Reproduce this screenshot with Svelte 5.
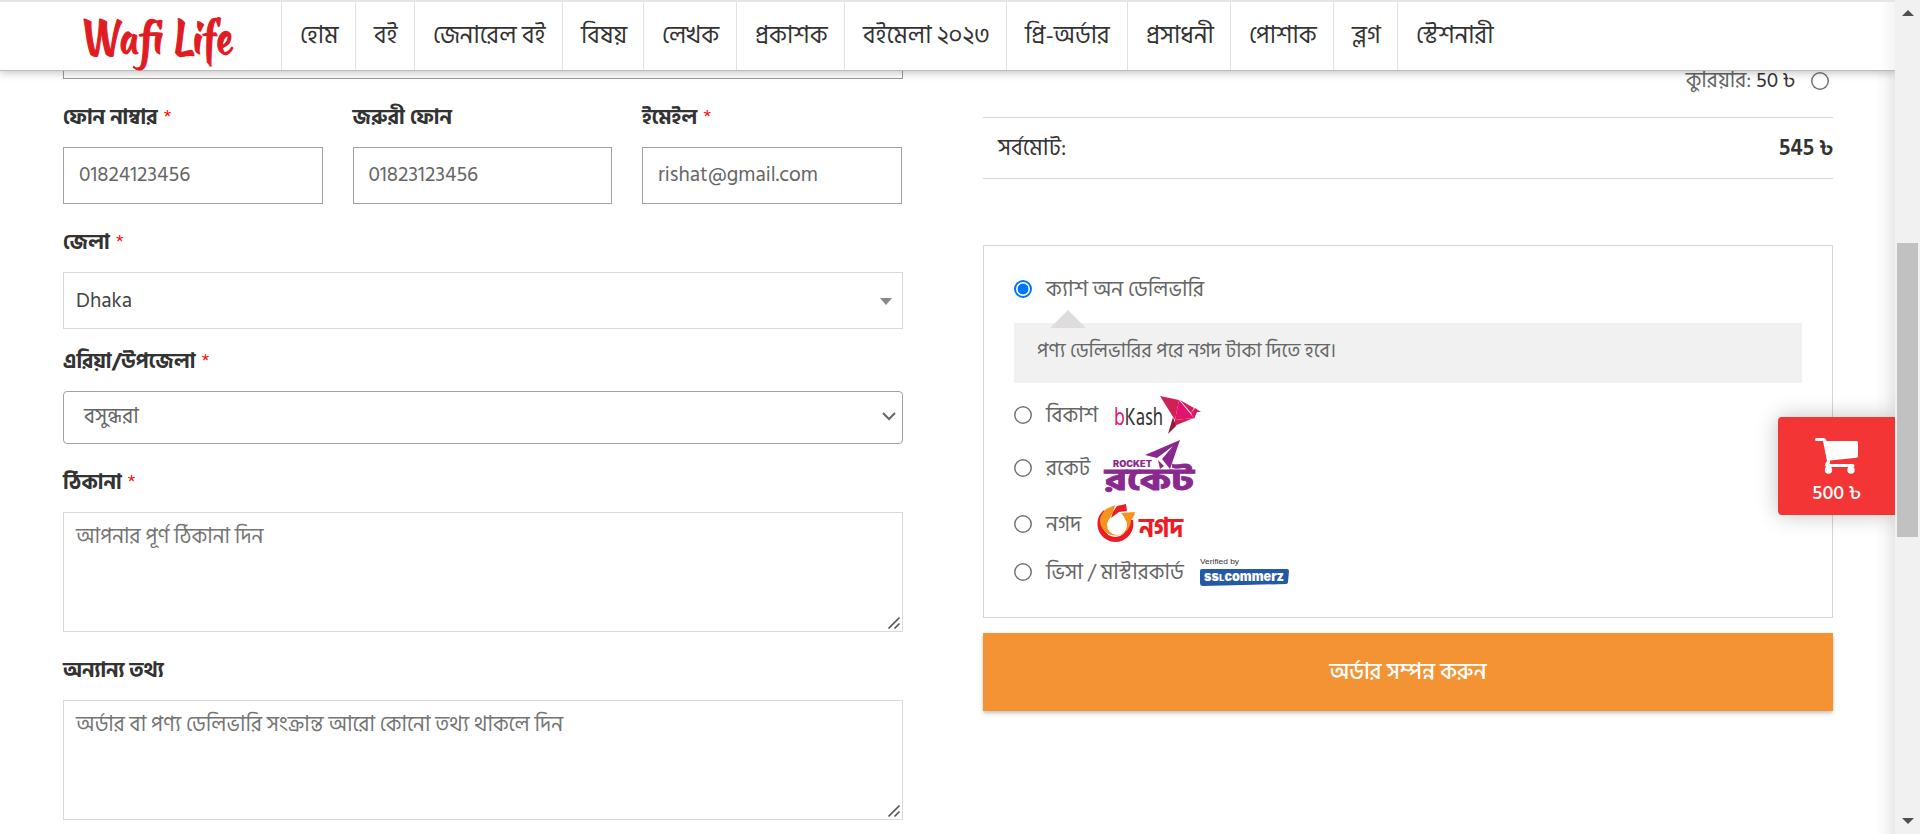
<script>
  const nav = [
    { label: 'হোম', width: 74 },
    { label: 'বই', width: 59 },
    { label: 'জেনারেল বই', width: 148 },
    { label: 'বিষয়', width: 81 },
    { label: 'লেখক', width: 93 },
    { label: 'প্রকাশক', width: 108 },
    { label: 'বইমেলা ২০২৩', width: 162 },
    { label: 'প্রি-অর্ডার', width: 121 },
    { label: 'প্রসাধনী', width: 103 },
    { label: 'পোশাক', width: 103 },
    { label: 'ব্লগ', width: 64 },
    { label: 'স্টেশনারী', width: 130 }
  ];
  const contacts = [
    { label: 'ফোন নাম্বার', value: '01824123456', required: true },
    { label: 'জরুরী ফোন', value: '01823123456', required: false },
    { label: 'ইমেইল', value: 'rishat@gmail.com', required: true }
  ];
</script>

{#snippet label(text, required)}
  <div class="label"><b>{text}</b>{#if required}<span class="star">*</span>{/if}</div>
{/snippet}

{#snippet grip()}
  <svg class="grip" width="12" height="12" viewBox="0 0 12 12"><path d="M0.500 11.500L11.500 0.500M6.500 11.500L11.500 6.500" stroke="#555" stroke-width="1.700" fill="none" /></svg>
{/snippet}

<div class="page">
  <div class="view">
    <header>
      <div class="brand">
        <svg width="150" height="60" viewBox="0 0 150 60" aria-label="Wafi Life">
          <text x="0" y="42.500" transform="translate(-13 0) skewX(13)" class="logo" textLength="152" lengthAdjust="spacingAndGlyphs">Wafi Life</text>
        </svg>
      </div>
      <nav>
        {#each nav as item}
          <a style="width:{item.width}px">{item.label}</a>
        {/each}
      </nav>
    </header>

    <main>
      <section class="form">
        <div class="cut"></div>
        <div class="trio">
          {#each contacts as c}
            <div>
              {@render label(c.label, c.required)}
              <div class="box dark">{c.value}</div>
            </div>
          {/each}
        </div>
        {@render label('জেলা', true)}
        <div class="box district"><span>Dhaka</span><i class="caret"></i></div>
        {@render label('এরিয়া/উপজেলা', true)}
        <div class="box dark area"><span>বসুন্ধরা</span><svg width="14" height="9" viewBox="0 0 14 9"><path d="M1 1l6 6 6-6" fill="none" stroke="#666" stroke-width="2" /></svg></div>
        {@render label('ঠিকানা', true)}
        <div class="box note">আপনার পূর্ণ ঠিকানা দিন{@render grip()}</div>
        {@render label('অন্যান্য তথ্য', false)}
        <div class="box note">অর্ডার বা পণ্য ডেলিভারি সংক্রান্ত আরো কোনো তথ্য থাকলে দিন{@render grip()}</div>
      </section>

      <section class="order">
        <div class="courier">কুরিয়ার: <em>50 ৳</em><i class="radio"></i></div>
        <div class="total"><span>সর্বমোট:</span><b>545 ৳</b></div>
        <div class="payment">
          <div class="opt first"><i class="radio on"></i><span>ক্যাশ অন ডেলিভারি</span></div>
          <div class="hint">পণ্য ডেলিভারির পরে নগদ টাকা দিতে হবে।</div>
          <div class="opt bk"><i class="radio"></i><span>বিকাশ</span>
            <svg class="m-bk" width="88" height="40" viewBox="0 0 88 40">
              <text x="0" y="30" class="bk-t" textLength="49" lengthAdjust="spacingAndGlyphs"><tspan fill="#e2136e">b</tspan>Kash</text>
              <path d="M46 1L65 5L61 25Z" fill="#d12053" /><path d="M65 5L61 25L80 23Z" fill="#e2136e" /><path d="M66 5L80 13L77 18Z" fill="#d12053" /><path d="M77 18L81 13L87 17L83 17L80 24Z" fill="#d91a60" /><path d="M61 25L80 23L60 31Z" fill="#d12053" /><path d="M59 22L62 31L54 39Z" fill="#9e1638" />
            </svg>
          </div>
          <div class="opt rk"><i class="radio"></i><span>রকেট</span>
            <svg class="m-rk" width="92" height="56" viewBox="0 0 92 56">
              <path d="M41 15L76 0L66 29L58 19L69 6L53 18Z" fill="#89288f" /><path d="M54 20L60 26L56 29Z" fill="#89288f" />
              <text x="9" y="26.500" class="rk-s" textLength="39" lengthAdjust="spacingAndGlyphs">ROCKET</text>
              <text x="1" y="49.500" class="rk-t" textLength="89" lengthAdjust="spacingAndGlyphs">রকেট</text>
            </svg>
          </div>
          <div class="opt ng"><i class="radio"></i><span>নগদ</span>
            <svg class="m-ng" width="88" height="40" viewBox="0 0 88 40">
              <path d="M7 6A18 18 0 1 0 36 16L30 16A12.500 12.500 0 1 1 10 11Z" fill="#ec1c24" />
              <path d="M9 5L18 1L16 8L13 14A10 10 0 1 0 28 15L26 11L38 10L34 16A15.500 15.500 0 1 1 3 16Q4 10 9 5Z" fill="#f6921e" />
              <path d="M20 2L29 0L30 7L22 8L14 14L16 8Z" fill="#ec1c24" /><path d="M24 9L38 8L36 14L29 15Z" fill="#f6921e" />
              <text x="42" y="32.500" class="ng-t" textLength="44" lengthAdjust="spacingAndGlyphs">নগদ</text>
            </svg>
          </div>
          <div class="opt vs"><i class="radio"></i><span>ভিসা / মাস্টারকার্ড</span>
            <svg class="m-vs" width="90" height="32" viewBox="0 0 90 32">
              <text x="0" y="8" class="vs-s" textLength="39" lengthAdjust="spacingAndGlyphs">Verified by</text>
              <path d="M2 13L87 13Q89 13 89 15L88 26Q88 28 86 28L3 30Q0 30 0 27V15Q0 13 2 13Z" fill="#2458a9" />
              <text x="4" y="25" class="vs-t" textLength="80" lengthAdjust="spacingAndGlyphs">ssʟcommerz</text>
            </svg>
          </div>
        </div>
        <button>অর্ডার সম্পন্ন করুন</button>
      </section>
    </main>

    <div class="cart">
      <svg width="43" height="36" viewBox="0 0 43 36" fill="#fff"><path d="M1.500 0H9Q10.500 0 11 1.500L11.500 3H41.500Q43 3 43 4.500V18Q43 19.500 41.500 19.700L15 22.500Q15.500 24 14.500 26H38Q39.500 26 39.500 27.500T38 29H12Q10 29 10 27Q10 26 12 23L8 3H1.500Q0 3 0 1.500T1.500 0Z" /><circle cx="13.500" cy="32" r="3.700" /><circle cx="36" cy="32" r="3.700" /></svg>
      <span>500 ৳</span>
    </div>
  </div>
  <div class="scroll"><i class="up"></i><div class="thumb"></div><i class="down"></i></div>
</div>

<style>
  :global(body) { margin: 0; overflow: hidden; background: #fff; }
  .page { display: flex; width: 1920px; height: 834px; overflow: hidden; font-family: 'Hind Siliguri', 'Noto Sans', sans-serif; font-size: 21px; color: #666; }
  .view { position: relative; width: 1895px; height: 834px; overflow: hidden; background: linear-gradient(90deg, #fff 1875px, #f8f8f8 1885px, #e6e6e6 1895px); }
  header { position: relative; z-index: 2; box-sizing: border-box; height: 71px; display: flex; border-top: 2px solid #e6e6e6; border-bottom: 1px solid #bbb; background: linear-gradient(90deg, #fff 1880px, #f4f4f4 1895px); box-shadow: 0 1px 9px rgba(0,0,0,.28); }
  .brand { width: 281px; box-sizing: border-box; padding: 8px 0 0 84px; }
  .logo { font: 400 46px 'Kaushan Script', 'Caveat Brush', cursive; fill: #e01b22; stroke: #e01b22; stroke-width: 1.200px; }
  nav { display: flex; }
  nav a { box-sizing: border-box; border-left: 1px solid #e1e1e1; padding-left: 18px; font-size: 24px; line-height: 67px; color: #333; white-space: nowrap; }
  main { display: flex; gap: 80px; padding-left: 63px; }
  .form { width: 840px; }
  .cut { height: 7px; border: 1px solid #999; border-top: 0; margin-bottom: 19px; }
  .trio { display: grid; grid-template-columns: 259.500px 259.500px 259.500px; gap: 30px; margin-bottom: 19px; }
  .label { height: 49px; line-height: 40px; color: #333; display: flex; gap: 6px; white-space: nowrap; }
  .star { color: red; font-weight: 300; }
  .box { position: relative; box-sizing: border-box; border: 1px solid #d9d9d9; height: 57px; padding: 0 15px; line-height: 55px; white-space: nowrap; }
  .dark { border-color: #a2a2a2; }
  .district { display: flex; justify-content: space-between; align-items: center; padding: 2px 10px 0 12px; color: #444; line-height: 53px; margin-bottom: 13px; }
  .caret { border: 6px solid transparent; border-top: 7px solid #888; border-bottom: 0; }
  .area { height: 53px; line-height: 48px; border-radius: 4px; padding: 0 6px 2px 20px; display: flex; justify-content: space-between; align-items: center; margin-bottom: 19px; }
  .note { height: 120px; padding: 0 12px; line-height: 48px; color: #757575; margin-bottom: 19px; }
  .grip { position: absolute; right: 2px; bottom: 2px; }
  .order { width: 850px; }
  .radio { box-sizing: border-box; display: block; flex: none; width: 18px; height: 18px; box-shadow: inset 0 0 0 1.500px #767676; border-radius: 50%; background: #fff; }
  .radio.on { border: 2px solid #0075ff; box-shadow: none; background: radial-gradient(circle, #0075ff 5px, #fff 5.800px); }
  .courier { height: 46px; box-sizing: border-box; display: flex; justify-content: flex-end; align-items: center; padding: 0 4px 26px 0; white-space: pre; line-height: 32px; }
  .courier em { font-style: normal; color: #333; margin-right: 16px; }
  .total { box-sizing: border-box; height: 62px; border-top: 1px solid #d9d9d9; border-bottom: 1px solid #d9d9d9; padding-left: 15px; display: flex; justify-content: space-between; line-height: 61px; color: #333; font-size: 22.500px; }
  .total b { font-weight: 600; line-height: 60px; }
  .payment { box-sizing: border-box; height: 373px; margin-top: 66px; padding: 26px 30px 0; border: 1px solid #d5d5d5; }
  .opt { display: flex; align-items: center; white-space: nowrap; height: 32px; }
  .opt span { margin-left: 14px; line-height: 32px; padding-top: 1px; }
  .first { height: 33px; }
  .first span { padding-top: 2px; }
  .hint { position: relative; height: 60px; margin-top: 18px; padding-left: 23px; background: #f1f1f1; line-height: 57px; font-size: 19.750px; }
  .hint::before { content: ''; position: absolute; left: 36px; top: -13px; border: 18px solid transparent; border-top: 0; border-bottom-color: #dfdcde; }
  .bk { margin-top: 16px; } .rk { margin-top: 21px; } .ng { margin-top: 24px; } .vs { margin-top: 16px; }
  svg { flex: none; overflow: visible; display: block; }
  .m-bk { margin-left: 16px; } .m-rk { margin-left: 14px; } .m-ng { margin-left: 16px; } .m-vs { margin-left: 16px; }
  .bk-t { font: 25px 'Hind Siliguri', 'Open Sans', sans-serif; fill: #333; }
  .rk-s { font: 900 8.500px Inter, sans-serif; fill: #89288f; }
  .rk-t { font: 700 29px 'Hind Siliguri', sans-serif; fill: #89288f; stroke: #89288f; stroke-width: .8px; }
  .ng-t { font: 700 27px 'Hind Siliguri', sans-serif; fill: #ec1c24; }
  .vs-s { font: 8px 'Liberation Sans', sans-serif; fill: #333; }
  .vs-t { font: 900 13px Inter, sans-serif; fill: #fff; }
  button { display: block; width: 850px; height: 78px; margin-top: 15px; padding: 0 0 1px; border: 0; background: #f39334; box-shadow: 0 2px 4px rgba(0,0,0,.25); color: #fff; font: 500 22.200px 'Hind Siliguri', sans-serif; }
  .cart { position: absolute; z-index: 3; left: 1778px; top: 417px; width: 117px; height: 98px; box-sizing: border-box; padding-top: 21px; border-radius: 4px 0 0 4px; background: #f33535; box-shadow: 0 0 22px rgba(0,0,0,.24); display: flex; flex-direction: column; align-items: center; color: #fff; font: 500 20px/38px 'Hind Siliguri', sans-serif; }
  .scroll { width: 25px; height: 834px; background: #f1f1f1; display: flex; flex-direction: column; align-items: center; box-sizing: border-box; padding: 10px 0; }
  .thumb { width: 21px; height: 294px; margin-top: 227px; background: #c1c1c1; }
  .up, .down { border: 6px solid transparent; }
  .up { border-top: 0; border-bottom-color: #505050; }
  .down { border-bottom: 0; border-top-color: #505050; margin-top: auto; }
</style>
